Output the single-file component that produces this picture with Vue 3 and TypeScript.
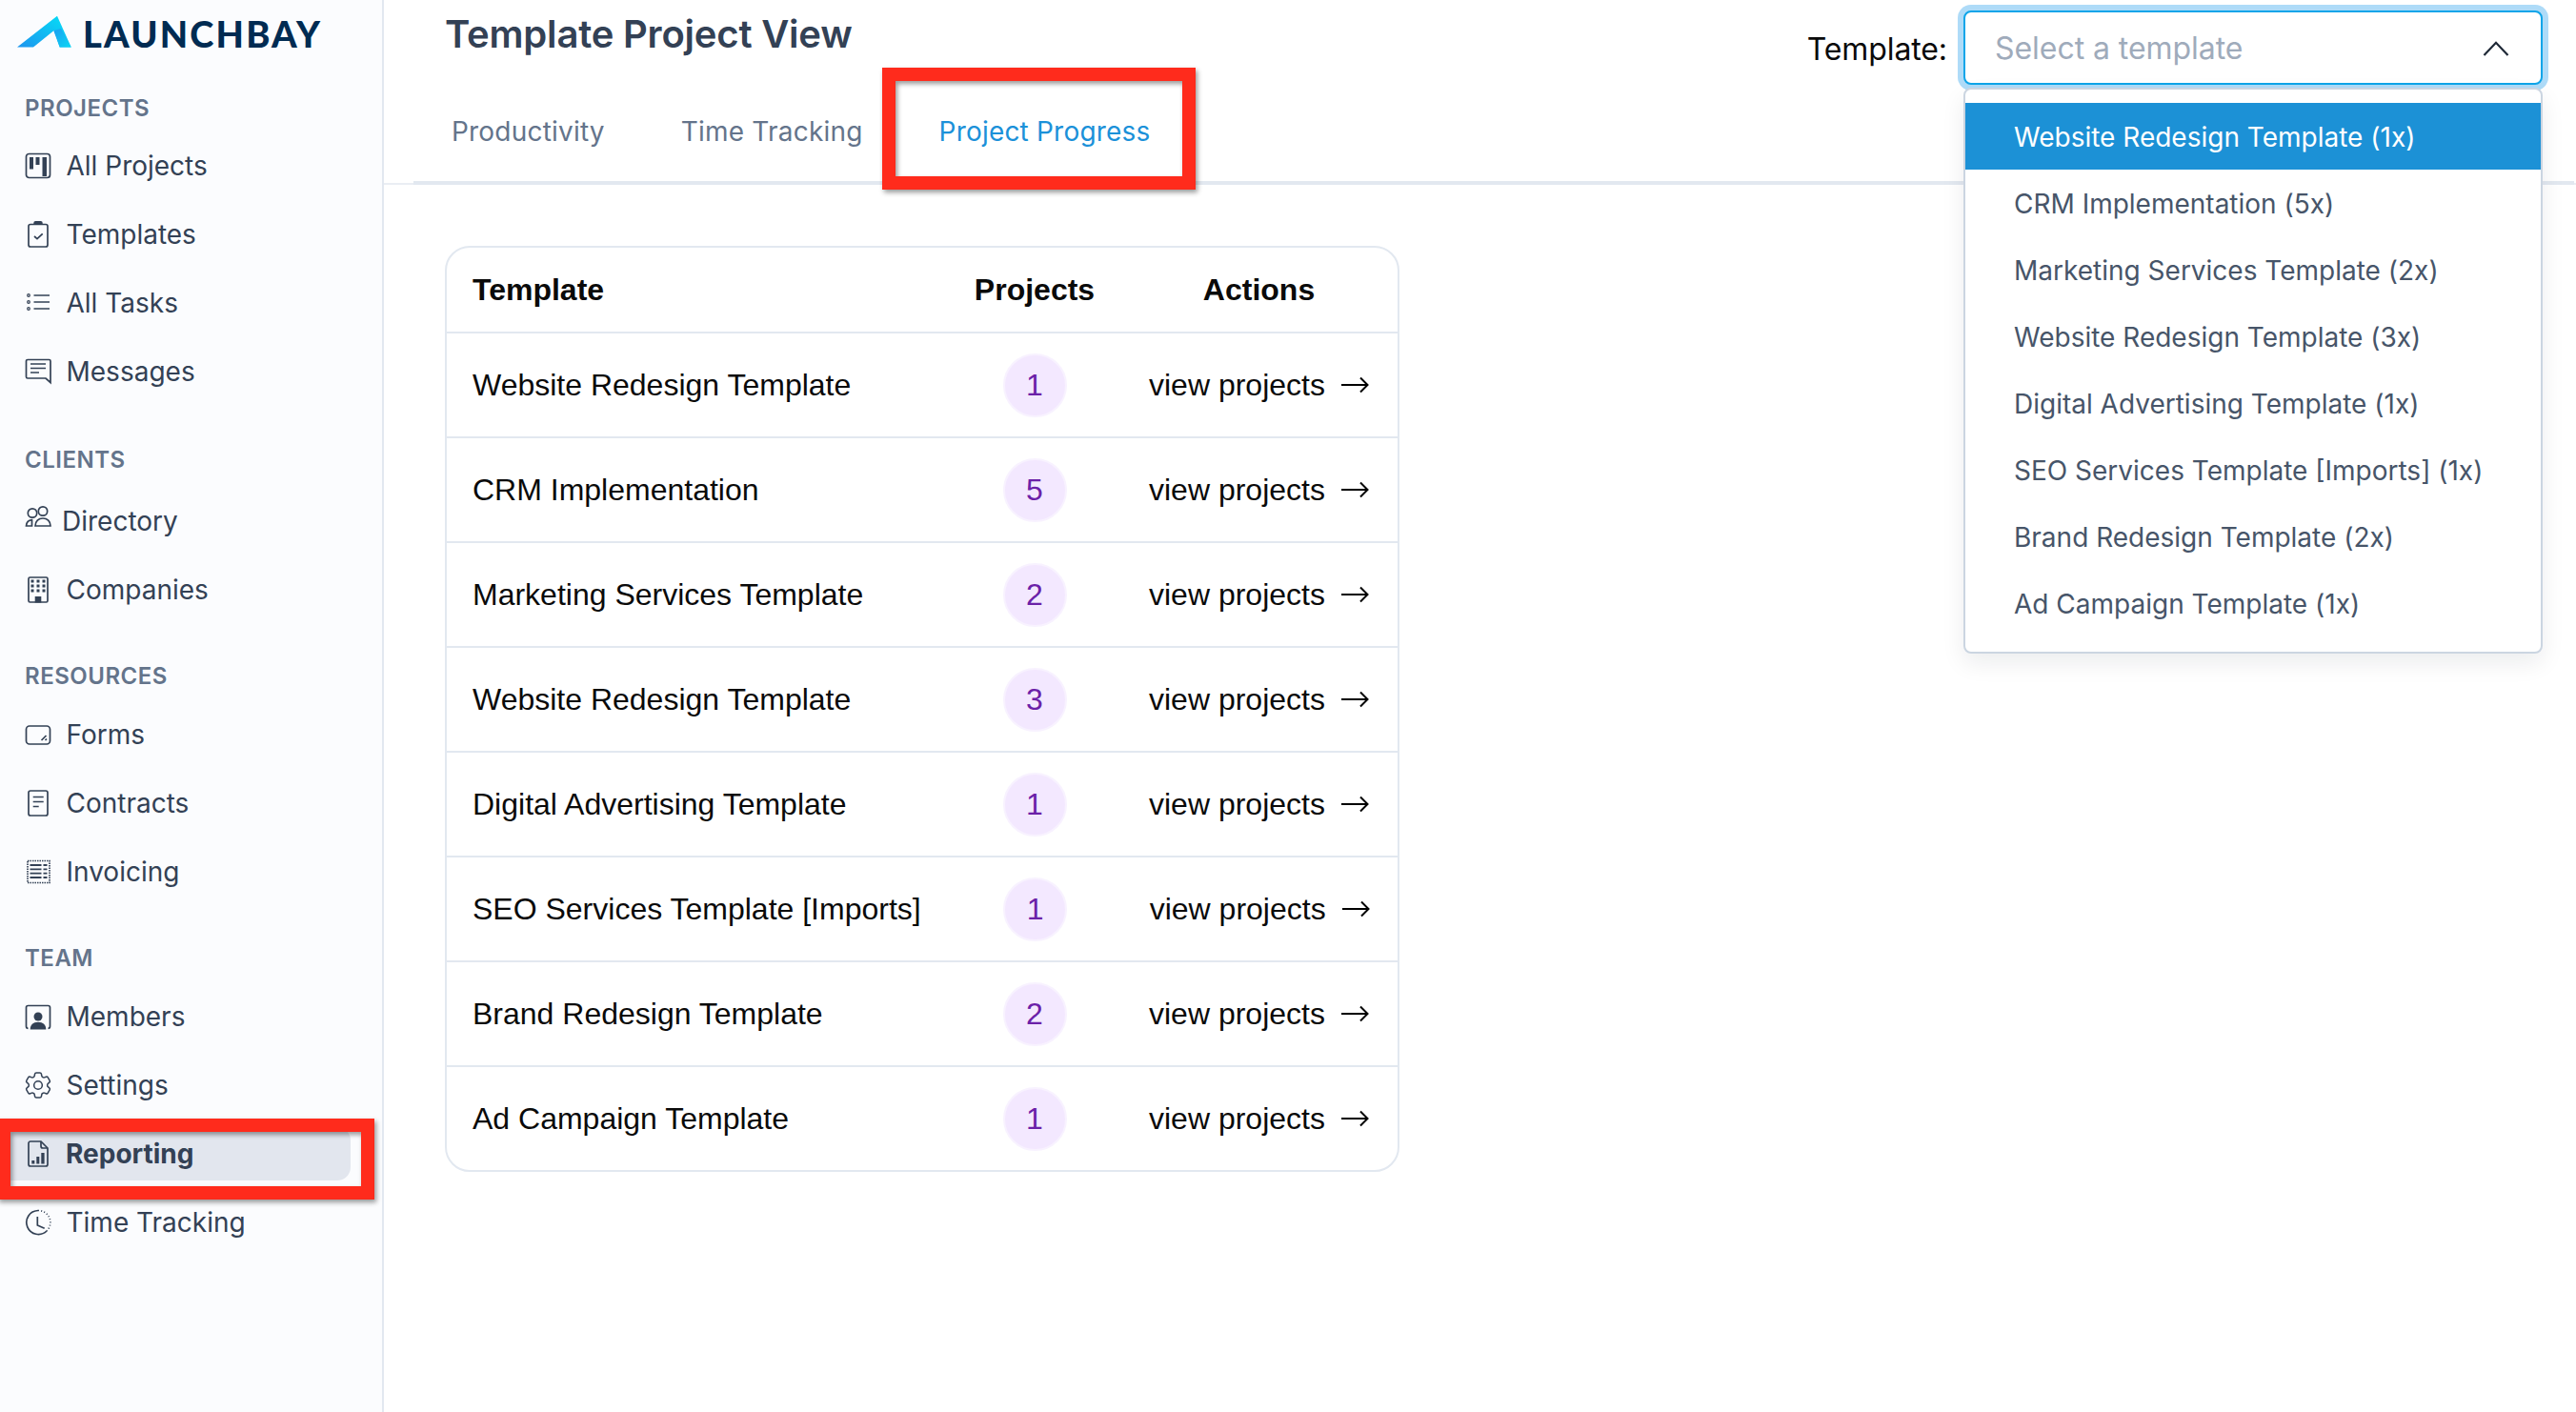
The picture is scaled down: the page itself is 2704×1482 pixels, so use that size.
<script setup lang="ts">
interface NavItem { label: string; icon: string; cls?: string; active?: boolean }
interface NavGroup { title: string; cls: string; items: NavItem[] }

const icons: Record<string, string> = {
  board: '<rect x="1.500" y="1.500" width="25" height="25" rx="3"/><path class="fill" d="M5 5h4v12.500H5zM11.500 5h4v8h-4zM18.500 5H23v20h-4.500z"/>',
  clip: '<rect x="4" y="3.500" width="20" height="23.500" rx="2"/><path class="fill" d="M9.300 4V2q0-2 2-2h5.400q2 0 2 2v2z"/><path d="M10 16l3 2.700 5.700-5.400"/>',
  list: '<circle cx="4" cy="6" r="1.300" stroke-width="1.200"/><circle cx="4" cy="13" r="1.300" stroke-width="1.200"/><circle cx="4" cy="20" r="1.300" stroke-width="1.200"/><path d="M9.500 6H26M9.500 13H26M9.500 20H26"/>',
  chat: '<path d="M3 1.500h22.500a1.500 1.500 0 0 1 1.500 1.500v22.500l-5-4.500H3a1.500 1.500 0 0 1-1.500-1.500V3A1.500 1.500 0 0 1 3 1.500z"/><path d="M6 6h16M6 10.500h16M6 15h9"/>',
  people: '<circle cx="8" cy="11.500" r="4.700"/><circle cx="19" cy="9.500" r="4.700"/><path d="M11 25c0-5 3.500-8 8-8s8 3 8 8zM7.500 25H1.500c.3-3.500 2.300-6 6-6.300z"/>',
  building: '<rect x="4" y="1" width="20" height="26" rx="1.500"/><path class="fill" d="M6.500 3.500h3v3h-3zM12.500 3.500h3v3h-3zM18.500 3.500h3v3h-3zM6.500 8.500h3v3h-3zM12.500 8.500h3v3h-3zM18.500 8.500h3v3h-3zM6.500 13.500h3v3h-3zM12.500 13.500h3v3h-3zM18.500 13.500h3v3h-3zM10.700 21h6.600v6.500h-6.600z"/>',
  form: '<rect x="1.500" y="5" width="25" height="19" rx="3.500"/><path d="M17.500 20l5-5M21.500 20l1.500-1.500"/>',
  doc: '<rect x="4" y="1" width="20" height="26" rx="2"/><path d="M8.700 7.500h11M8.700 12.500h11M8.700 17.500h6"/>',
  invoice: '<rect x="3" y="2.500" width="23" height="23" stroke-dasharray="1.500 1"/><path d="M5.500 7h12M5.500 11.300h12M5.500 15.600h12M5.500 20h12M19.500 7h4M19.500 11.300h4M19.500 15.600h4M19.500 20h4" stroke-width="1.800"/>',
  member: '<path d="M3.500 26.300q-2 0-2-2V4.500q0-2 2-2h21q2 0 2 2v19.800q0 2-2 2"/><circle class="fill" cx="14" cy="14" r="4.500"/><path class="fill" d="M5.700 27.500c0-5 3-7.800 8.300-7.800s8.300 2.800 8.300 7.800z"/>',
  gear: '<g transform="translate(14 14) scale(1.440) translate(-12 -12)" stroke-width="1.050"><path d="M9.594 3.940c.09-.542.56-.94 1.110-.94h2.593c.55 0 1.020.398 1.110.94l.213 1.281c.063.374.313.686.645.87.074.04.147.083.22.127.325.196.72.257 1.075.124l1.217-.456a1.125 1.125 0 0 1 1.370.49l1.296 2.247a1.125 1.125 0 0 1-.26 1.431l-1.003.827c-.293.241-.438.613-.43.992a7.723 7.723 0 0 1 0 .255c-.008.378.137.75.43.991l1.004.827c.424.35.534.955.26 1.430l-1.298 2.247a1.125 1.125 0 0 1-1.369.491l-1.217-.456c-.355-.133-.75-.072-1.076.124a6.470 6.470 0 0 1-.22.128c-.331.183-.581.495-.644.869l-.213 1.281c-.09.543-.56.94-1.110.94h-2.594c-.55 0-1.019-.398-1.110-.94l-.213-1.281c-.062-.374-.312-.686-.644-.87a6.520 6.520 0 0 1-.22-.127c-.325-.196-.72-.257-1.076-.124l-1.217.456a1.125 1.125 0 0 1-1.369-.49l-1.297-2.247a1.125 1.125 0 0 1 .26-1.431l1.004-.827c.292-.24.437-.613.43-.991a6.932 6.932 0 0 1 0-.255c.007-.38-.138-.751-.43-.992l-1.004-.827a1.125 1.125 0 0 1-.26-1.430l1.297-2.247a1.125 1.125 0 0 1 1.370-.491l1.216.456c.356.133.751.072 1.076-.124.072-.044.146-.086.22-.128.332-.183.582-.495.644-.869l.214-1.280Z"/><circle cx="12" cy="12" r="3"/></g>',
  report: '<path d="M6 1h11l7 7v17a2 2 0 0 1-2 2H6a2 2 0 0 1-2-2V3a2 2 0 0 1 2-2z"/><path d="M17 1v5a2 2 0 0 0 2 2h5"/><path class="fill" d="M7.300 21h3v3.500h-3zM12.300 17h3v7.500h-3zM17.300 13h3.300v11.500h-3.300z"/>',
  clock: '<path d="M14 1.500A12.500 12.500 0 1 0 23 23"/><path d="M14 1.500A12.500 12.500 0 0 1 23 23" stroke-dasharray="1 2.200"/><path d="M13.300 8v9l7.400 3.300"/>'
}

const groups: NavGroup[] = [
  { title: 'PROJECTS', cls: 'g-projects', items: [
    { label: 'All Projects', icon: 'board' },
    { label: 'Templates', icon: 'clip' },
    { label: 'All Tasks', icon: 'list' },
    { label: 'Messages', icon: 'chat' }
  ] },
  { title: 'CLIENTS', cls: 'g-clients', items: [
    { label: 'Directory', icon: 'people', cls: 'directory' },
    { label: 'Companies', icon: 'building' }
  ] },
  { title: 'RESOURCES', cls: 'g-resources', items: [
    { label: 'Forms', icon: 'form' },
    { label: 'Contracts', icon: 'doc' },
    { label: 'Invoicing', icon: 'invoice' }
  ] },
  { title: 'TEAM', cls: 'g-team', items: [
    { label: 'Members', icon: 'member' },
    { label: 'Settings', icon: 'gear' },
    { label: 'Reporting', icon: 'report', active: true },
    { label: 'Time Tracking', icon: 'clock' }
  ] }
]

const rows = [
  { name: 'Website Redesign Template', count: 1 },
  { name: 'CRM Implementation', count: 5 },
  { name: 'Marketing Services Template', count: 2 },
  { name: 'Website Redesign Template', count: 3 },
  { name: 'Digital Advertising Template', count: 1 },
  { name: 'SEO Services Template [Imports]', count: 1 },
  { name: 'Brand Redesign Template', count: 2 },
  { name: 'Ad Campaign Template', count: 1 }
]
</script>

<template>
  <div class="app">
    <aside class="sidebar">
      <div class="logo">
        <svg width="60" height="36" viewBox="18 16 60 36">
          <defs>
            <linearGradient id="lg1" x1="0" y1="1" x2="1" y2="0.200">
              <stop offset="0" stop-color="#1d94ee" />
              <stop offset="1" stop-color="#06dcf6" />
            </linearGradient>
            <linearGradient id="lg2" x1="0" y1="0" x2="1" y2="1">
              <stop offset="0" stop-color="#1c9df0" />
              <stop offset="1" stop-color="#0bd8f4" />
            </linearGradient>
          </defs>
          <path d="M18 49.500 60 16.700 74.700 49.500H62.700L56.700 32 35 49.500z" fill="url(#lg1)" />
          <path d="M56.300 32.300 64 30 74.700 49.500H62.700z" fill="url(#lg2)" />
        </svg>
        <span class="logo-text">LAUNCHBAY</span>
      </div>

      <section v-for="g in groups" :key="g.title" class="group" :class="g.cls">
        <h3 class="group-title">{{ g.title }}</h3>
        <a
          v-for="item in g.items"
          :key="item.label"
          class="nav-item"
          :class="[item.cls, { active: item.active }]"
        >
          <svg class="nav-icon" width="28" height="28" viewBox="0 0 28 28" v-html="icons[item.icon]"></svg>
          <span>{{ item.label }}</span>
          <span v-if="item.active" class="callout callout-nav"></span>
        </a>
      </section>
    </aside>

    <main class="main">
      <div class="top">
        <h1 class="title">Template Project View</h1>
        <div class="picker">
          <label class="picker-label">Template:</label>
          <div class="select-wrap">
            <div class="select">
              <span class="placeholder">Select a template</span>
              <svg width="28" height="16" viewBox="0 0 28 16" fill="none" stroke="#1f2937" stroke-width="2.200">
                <path d="M1.500 15 14 1.800 26.500 15" />
              </svg>
            </div>
            <ul class="menu">
              <li class="selected">Website Redesign Template (1x)</li>
              <li>CRM Implementation (5x)</li>
              <li>Marketing Services Template (2x)</li>
              <li>Website Redesign Template (3x)</li>
              <li>Digital Advertising Template (1x)</li>
              <li>SEO Services Template [Imports] (1x)</li>
              <li>Brand Redesign Template (2x)</li>
              <li>Ad Campaign Template (1x)</li>
            </ul>
          </div>
        </div>
      </div>

      <div class="tab-line">
        <nav class="tabs">
          <a class="tab">Productivity</a>
          <a class="tab">Time Tracking</a>
          <a class="tab current">
            Project Progress
            <span class="callout callout-tab"></span>
          </a>
        </nav>
      </div>

      <div class="table">
        <div class="t-row t-head">
          <div>Template</div>
          <div class="center">Projects</div>
          <div class="center">Actions</div>
        </div>
        <div v-for="(r, i) in rows" :key="i" class="t-row t-body">
          <div class="name">{{ r.name }}</div>
          <div class="center"><span class="badge">{{ r.count }}</span></div>
          <a class="action">
            <span>view projects</span>
            <svg width="30" height="18" viewBox="0 0 30 18" fill="none" stroke="#000" stroke-width="2">
              <path d="M1 9h27.500M21 1.500 28.500 9 21 16.500" />
            </svg>
          </a>
        </div>
      </div>
    </main>
  </div>
</template>

<style>
html, body { margin: 0; background: #fff; }
</style>

<style scoped>
.app {
  display: flex;
  width: 2704px;
  height: 1482px;
  overflow: hidden;
  background: #fff;
  font-family: Inter, "Liberation Sans", sans-serif;
}
.sidebar {
  width: 403px;
  box-sizing: border-box;
  flex: none;
  background: #fbfcfe;
  border-right: 2px solid #e2e8f0;
  display: flex;
  flex-direction: column;
}
.logo {
  height: 66px;
  padding: 16px 0 0 18px;
  display: flex;
  align-items: flex-start;
  gap: 9px;
  box-sizing: border-box;
}
.logo-text {
  font-family: Lato, sans-serif;
  font-weight: 900;
  font-size: 38px;
  line-height: 38px;
  letter-spacing: 2.2px;
  color: #002b52;
}
.group { display: flex; flex-direction: column; }
.group-title {
  margin: 0;
  padding-left: 26px;
  font-size: 24px;
  font-weight: 600;
  letter-spacing: .5px;
  color: #64748b;
}
.g-projects .group-title { margin-top: 17px; height: 55px; line-height: 62px; }
.g-clients { margin-top: 43px; }
.g-clients .group-title { height: 28px; line-height: 28px; margin-bottom: 14px; }
.g-resources { margin-top: 41px; }
.g-resources .group-title { height: 28px; line-height: 28px; margin-bottom: 11px; }
.g-team { margin-top: 41px; }
.g-team .group-title { height: 28px; line-height: 28px; margin-bottom: 11px; }
.nav-item {
  position: relative;
  height: 72px;
  display: flex;
  align-items: center;
  gap: 15.500px;
  padding-left: 26px;
  font-size: 28px;
  color: #334155;
}
.nav-icon {
  flex: none;
  fill: none;
  stroke: #334155;
  stroke-width: 1.700;
  overflow: visible;
}
.nav-icon :deep(.fill) { fill: #334155; stroke: none; }
.nav-item.directory { gap: 11px; }
.nav-item.directory .nav-icon { margin-top: -12px; }
.nav-item.active { font-weight: 700; gap: 15px; }
.nav-item.active::before {
  content: "";
  position: absolute;
  left: 8px;
  right: 33px;
  top: 8px;
  height: 56px;
  z-index: 0;
  background: #e2e6ee;
  border-radius: 0 14px 14px 0;
}
.nav-item.active > * { position: relative; z-index: 1; }

.callout {
  box-sizing: border-box;
  border: 14px solid #ff2b1c;
  box-shadow: 2px 3px 5px rgba(0, 0, 0, .4), inset 2px 3px 5px rgba(0, 0, 0, .4);
  pointer-events: none;
}
.nav-item.active > .callout-nav {
  position: absolute;
  left: -3px;
  top: -1px;
  width: 396px;
  height: 85px;
  z-index: 2;
}
.tab > .callout-tab {
  position: absolute;
  left: -20px;
  top: -13px;
  width: 329px;
  height: 128px;
}

.main { flex: 1; min-width: 0; display: flex; flex-direction: column; }
.top {
  position: relative;
  z-index: 3;
  height: 84px;
  display: flex;
  justify-content: space-between;
  padding: 0 35px 0 64px;
}
.title {
  margin: 10px 0 0;
  font-size: 40px;
  line-height: 52px;
  font-weight: 600;
  letter-spacing: -.2px;
  color: #334155;
  height: 52px;
}
.picker { display: flex; align-items: flex-start; gap: 17px; margin-top: 11px; }
.picker-label { font-size: 32px; line-height: 81px; color: #0a0a0a; letter-spacing: -.1px; }
.select-wrap { position: relative; width: 608px; }
.select {
  box-sizing: border-box;
  height: 78px;
  border: 2px solid #0ea5e9;
  border-radius: 8px;
  box-shadow: 0 0 0 6px #aedbf8;
  background: #fff;
  display: flex;
  align-items: center;
  justify-content: space-between;
  padding: 1px 33px 0 31px;
}
.placeholder { font-size: 32px; color: #9fabbb; letter-spacing: -.05px; }
.menu {
  position: absolute;
  left: 0;
  right: 0;
  top: 81px;
  margin: 0;
  padding: 14px 0 15px;
  list-style: none;
  box-sizing: border-box;
  height: 594px;
  background: #fff;
  border: 2px solid #cbd5e1;
  border-radius: 8px;
  box-shadow: 0 10px 24px rgba(15, 23, 42, .08);
}
.menu li {
  height: 70px;
  line-height: 72px;
  padding-left: 51px;
  font-size: 28px;
  color: #475569;
  white-space: nowrap;
}
.menu li.selected { background: #1c91d6; color: #fff; }

.tab-line { border-bottom: 2px solid #eaeef3; height: 110px; box-sizing: border-box; }
.tabs {
  box-sizing: border-box;
  margin: 0 2px 0 31px;
  height: 110px;
  display: flex;
  border-bottom: 4px solid #e2e8f0;
}
.tab {
  position: relative;
  padding: 0 40px;
  height: 106px;
  line-height: 108px;
  font-size: 28px;
  letter-spacing: .2px;
  color: #64748b;
  white-space: nowrap;
}
.tab.current { color: #1b91d9; }

.table {
  width: 1002px;
  box-sizing: border-box;
  margin: 64px 0 0 64px;
  border: 2px solid #e2e8f0;
  border-radius: 26px;
  color: #0a0a0a;
  font-family: "Liberation Sans", Arial, sans-serif;
  font-size: 32px;
}
.t-row {
  display: grid;
  grid-template-columns: 1fr 180px 231px;
  column-gap: 30px;
  align-items: center;
  padding: 0 30px 0 27px;
  box-sizing: border-box;
}
.t-head { height: 88px; font-weight: 700; }
.t-body { height: 110px; border-top: 2px solid #e2e8f0; }
.name { white-space: nowrap; }
.center { display: flex; justify-content: center; }
.badge {
  box-sizing: border-box;
  width: 67px;
  height: 67px;
  border-radius: 50%;
  background: #f3e8ff;
  border: 2px solid #f8f2ff;
  color: #6b21a8;
  display: flex;
  align-items: center;
  justify-content: center;
}
.action { display: flex; align-items: center; justify-content: space-between; }
</style>
